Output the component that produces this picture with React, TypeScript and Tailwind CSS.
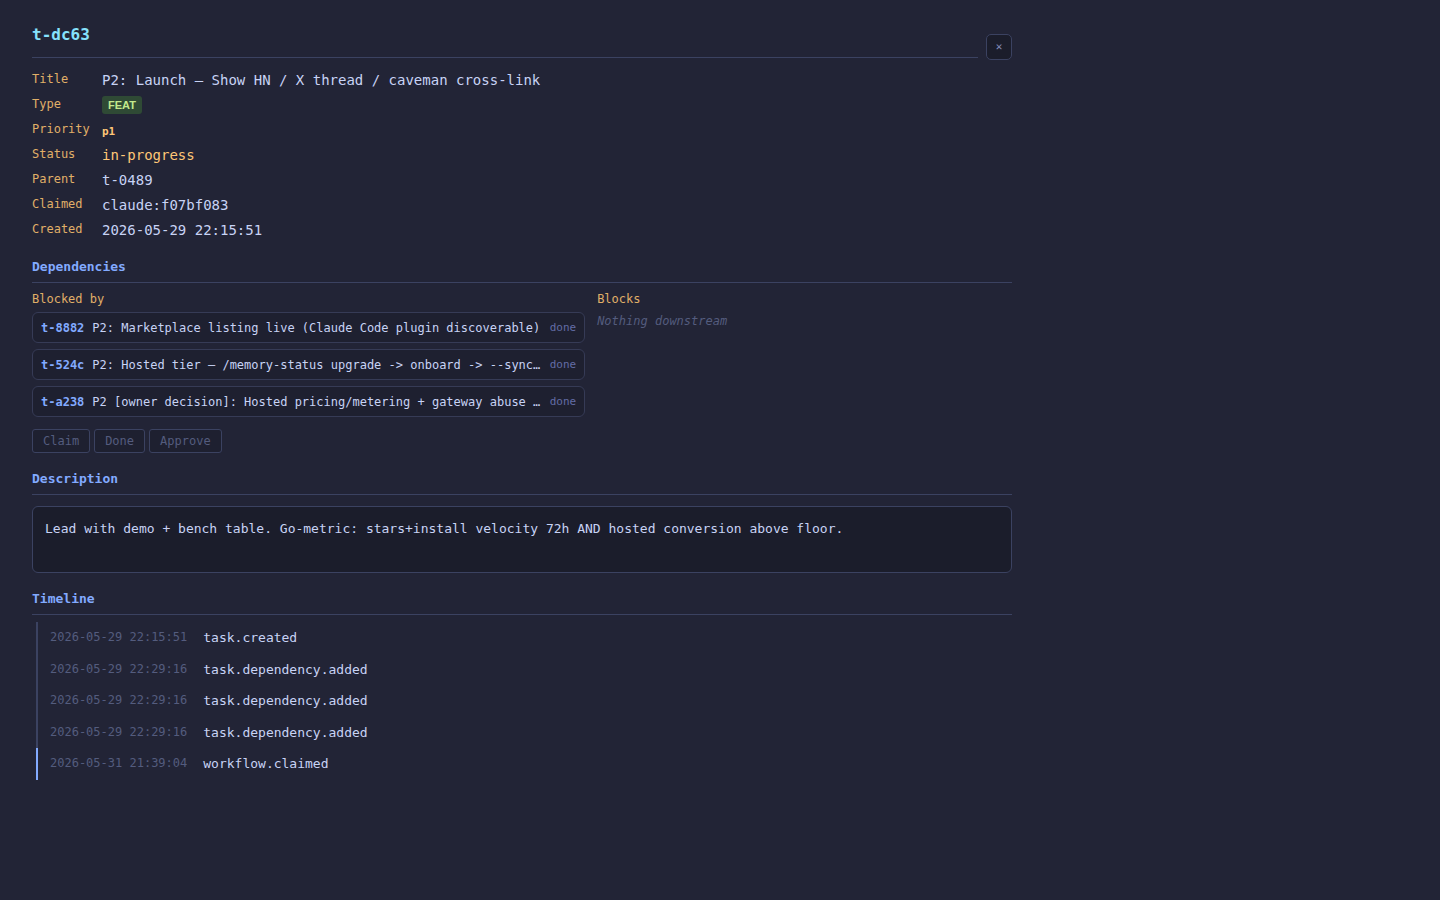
const mono = { fontFamily: '"DejaVu Sans Mono", "Liberation Mono", monospace' };

const meta: [string, string][] = [
  ["Title", "P2: Launch — Show HN / X thread / caveman cross-link"],
  ["Type", "FEAT"],
  ["Priority", "p1"],
  ["Status", "in-progress"],
  ["Parent", "t-0489"],
  ["Claimed", "claude:f07bf083"],
  ["Created", "2026-05-29 22:15:51"],
];

const blockedBy = [
  { id: "t-8882", title: "P2: Marketplace listing live (Claude Code plugin discoverable)" },
  { id: "t-524c", title: "P2: Hosted tier — /memory-status upgrade -> onboard -> --sync flow end to end" },
  { id: "t-a238", title: "P2 [owner decision]: Hosted pricing/metering + gateway abuse limits" },
];

const timeline = [
  { ts: "2026-05-29 22:15:51", ev: "task.created" },
  { ts: "2026-05-29 22:29:16", ev: "task.dependency.added" },
  { ts: "2026-05-29 22:29:16", ev: "task.dependency.added" },
  { ts: "2026-05-29 22:29:16", ev: "task.dependency.added" },
  { ts: "2026-05-31 21:39:04", ev: "workflow.claimed", latest: true },
];

function SectionHead({ children }: { children: React.ReactNode }) {
  return (
    <h3 className="border-b border-[#3b4261] pb-[6px] text-[13px] font-bold leading-[18px] text-[#82aaff]">
      {children}
    </h3>
  );
}

function MetaValue({ label, value }: { label: string; value: string }) {
  if (label === "Type") {
    return (
      <span
        className="mt-[1px] inline-block self-start rounded-[3px] bg-[#2f4a35] px-[6px] py-[2px] text-[11px] font-bold leading-[14px] text-[#c3e88d]"
        style={{ fontFamily: '"Liberation Sans", Arial, sans-serif' }}
      >
        {value}
      </span>
    );
  }
  if (label === "Priority") {
    return <span className="pt-[3px] text-[11px] font-bold leading-[17px] text-[#ffc777]">{value}</span>;
  }
  if (label === "Status") {
    return <span className="text-[14px] leading-[21px] text-[#ffc777]">{value}</span>;
  }
  return <span className="text-[14px] leading-[21px] text-[#c8d3f5]">{value}</span>;
}

export default function App() {
  return (
    <div className="min-h-[900px] w-full bg-[#222436] text-[#c8d3f5]" style={mono}>
      <div className="ml-[32px] w-[980px] pt-[24px]">
        <div className="flex items-end gap-2">
          <h2 className="flex-1 border-b border-[#3b4261] pb-[11px] text-[16px] font-bold leading-[22px] text-[#86e1fc]">
            t-dc63
          </h2>
          <button className="mb-[-2px] flex h-[26px] w-[26px] items-center justify-center rounded-[5px] border border-[#3b4261] bg-[#1b1d2b] text-[11px] text-[#828bb8]">
            ✕
          </button>
        </div>

        <div className="mt-[12px] grid grid-cols-[58px_1fr] gap-x-[12px] gap-y-[4px]">
          {meta.map(([label, value]) => (
            <div key={label} className="contents">
              <span className="text-[12px] leading-[19px] text-[#e0af68]">{label}</span>
              <div className="flex h-[21px]">
                <MetaValue label={label} value={value} />
              </div>
            </div>
          ))}
        </div>

        <div className="mt-[17px]">
          <SectionHead>Dependencies</SectionHead>
          <div className="mt-[8px] grid grid-cols-[minmax(0,4fr)_minmax(0,3fr)] gap-x-[12px]">
            <div className="min-w-0">
              <div className="text-[12px] leading-[17px] text-[#e0af68]">Blocked by</div>
              <div className="mt-[4px] flex flex-col gap-[6px]">
                {blockedBy.map((d) => (
                  <div
                    key={d.id}
                    className="flex h-[31px] items-center gap-[8px] rounded-[6px] border border-[#363b56] bg-[#1e2030] px-[8px] text-[12px]"
                  >
                    <span className="shrink-0 font-bold text-[#82aaff]">{d.id}</span>
                    <span className="min-w-0 flex-1 truncate text-[#c8d3f5]">{d.title}</span>
                    <span className="shrink-0 pt-[1px] text-[11px] text-[#636da6]">done</span>
                  </div>
                ))}
              </div>
              <div className="mt-[12px] flex gap-[4px]">
                {["Claim", "Done", "Approve"].map((b) => (
                  <button
                    key={b}
                    className="h-[24px] rounded-[3px] border border-[#3b4261] bg-[#1e2030] px-[10px] text-[12px] text-[#545c7e]"
                    style={mono}
                  >
                    {b}
                  </button>
                ))}
              </div>
            </div>
            <div className="min-w-0">
              <div className="text-[12px] leading-[17px] text-[#e0af68]">Blocks</div>
              <div className="mt-[4px] text-[12px] italic text-[#545c7e]">Nothing downstream</div>
            </div>
          </div>
        </div>

        <div className="mt-[17px]">
          <SectionHead>Description</SectionHead>
          <div className="mt-[11px] min-h-[67px] rounded-[6px] border border-[#3b4261] bg-[#1b1d2b] p-[12px] text-[13px] leading-[20px] text-[#c8d3f5]">
            Lead with demo + bench table. Go-metric: stars+install velocity 72h AND hosted conversion above floor.
          </div>
        </div>

        <div className="mt-[17px]">
          <SectionHead>Timeline</SectionHead>
          <div className="ml-[4px] mt-[7px] flex flex-col">
            {timeline.map((t, i) => (
              <div
                key={i}
                className={`flex items-center gap-[16px] border-l-2 py-[6px] pl-[12px] ${
                  t.latest ? "border-[#82aaff]" : "border-[#3b4261]"
                }`}
              >
                <span className="text-[12px] leading-[19.5px] text-[#545c7e]">{t.ts}</span>
                <span className="text-[13px] leading-[19.5px] text-[#c8d3f5]">{t.ev}</span>
              </div>
            ))}
          </div>
        </div>
      </div>
    </div>
  );
}
